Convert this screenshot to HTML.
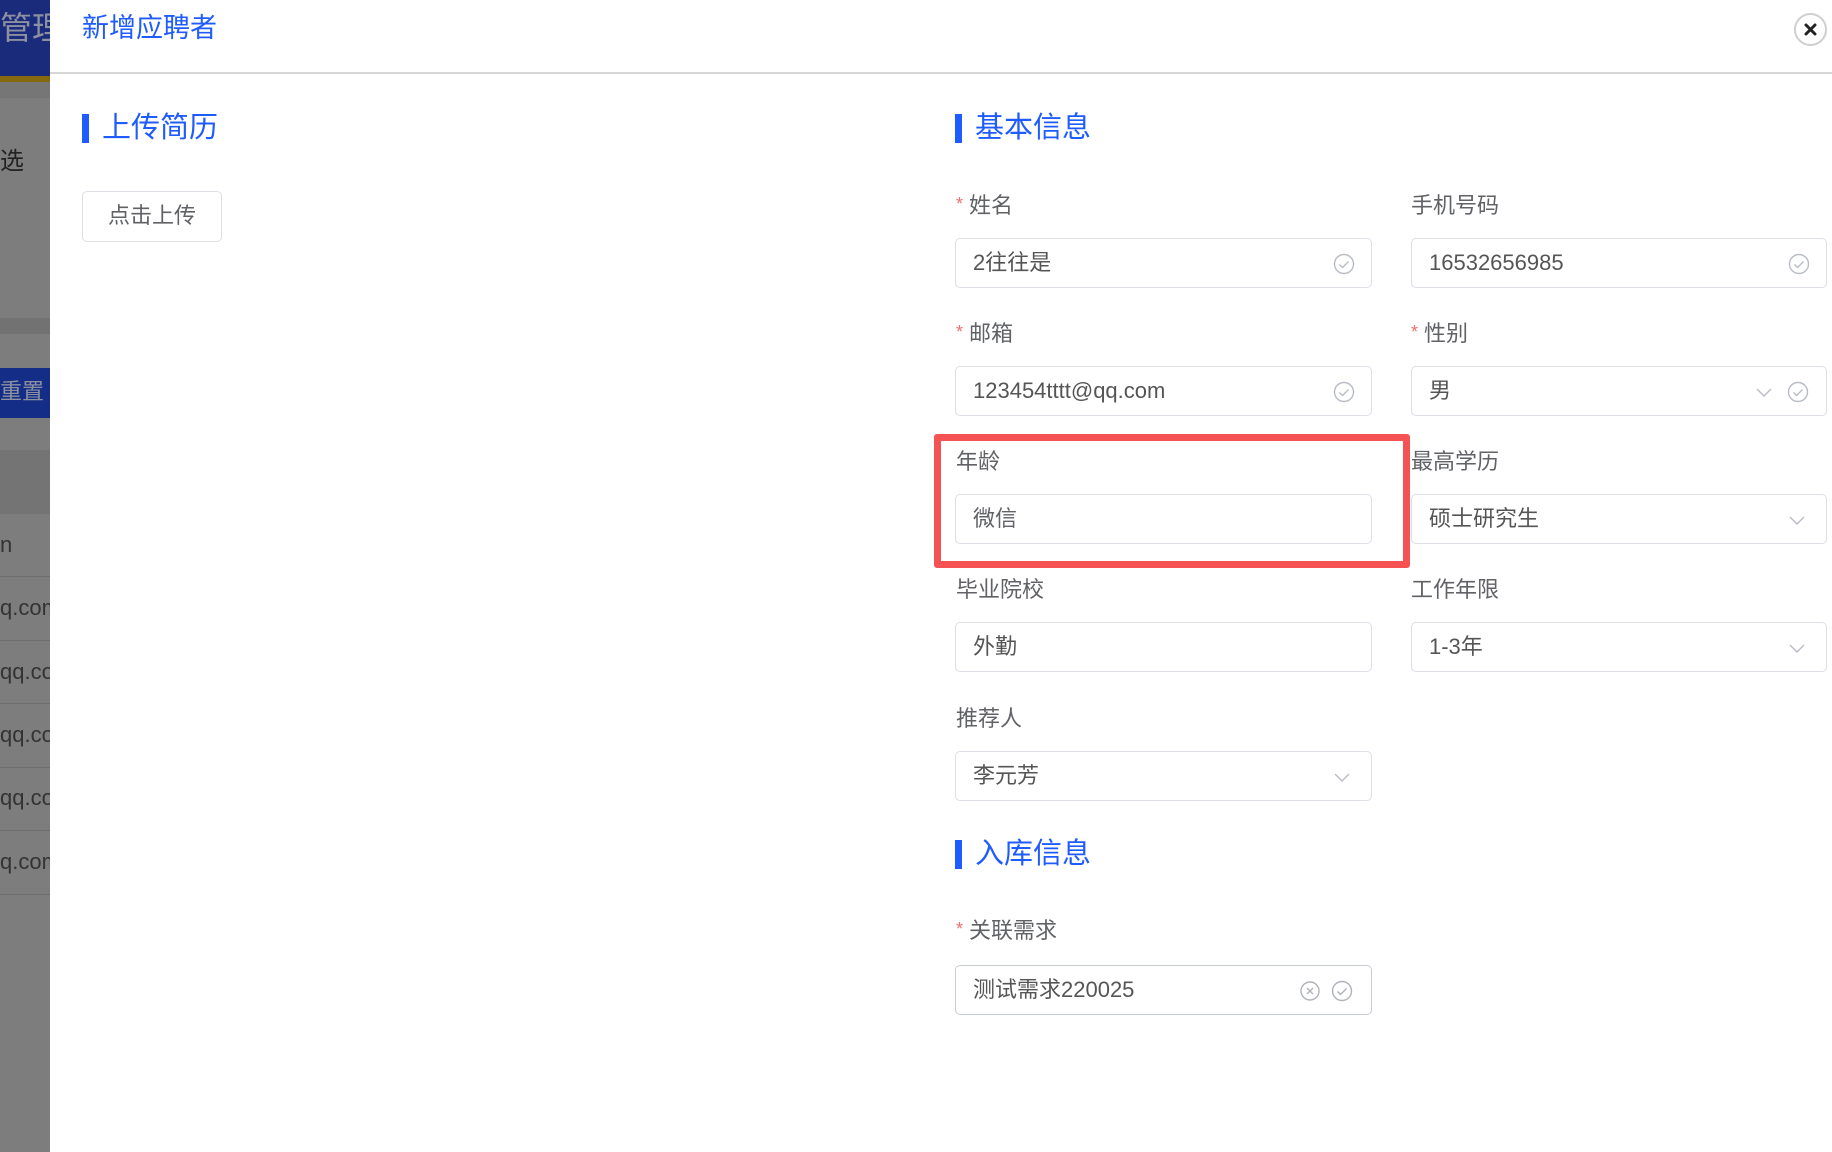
<!DOCTYPE html>
<html><head><meta charset="utf-8"><style>
*{margin:0;padding:0;box-sizing:border-box}
body{width:1832px;height:1152px;position:relative;overflow:hidden;background:#fff;font-family:"Liberation Sans","Noto Sans CJK SC",sans-serif}
.a{position:absolute}
.lbl{position:absolute;font-size:22px;color:#606266;line-height:30px}
.star{color:#f56c6c;font-size:18px;margin-right:6px;position:relative;top:-3px}
.inp{position:absolute;height:50px;border:1.5px solid #dcdfe6;border-radius:5px;font-size:22px;color:#555;line-height:47px;padding-left:17px;background:#fff}
.h{position:absolute;font-size:29px;color:#1f5cff;line-height:32px}
.bar{position:absolute;width:7px;height:29px;background:#1f5cff}
.ic{position:absolute;top:14px}
</style></head><body>
<div class="a" style="left:0;top:0;width:50px;height:1152px;background:#7d7d7d"></div>
<div class="a" style="left:0;top:0;width:50px;height:76px;background:#1a2b7c"></div>
<div class="a" style="left:0;top:10px;font-size:32px;color:#8c90a0;line-height:36px;white-space:nowrap">管理</div>
<div class="a" style="left:0;top:76px;width:50px;height:6px;background:#86680e"></div>
<div class="a" style="left:0;top:82px;width:50px;height:16px;background:#767676"></div>
<div class="a" style="left:0;top:148px;font-size:24px;color:#222;line-height:28px">选</div>
<div class="a" style="left:0;top:318px;width:50px;height:16px;background:#727272"></div>
<div class="a" style="left:0;top:368px;width:50px;height:50px;background:#142e88"></div>
<div class="a" style="left:0;top:378px;font-size:22px;color:#8c90a0;line-height:28px">重置</div>
<div class="a" style="left:0;top:450px;width:50px;height:64px;background:#747474"></div>
<div class="a" style="left:0;top:530px;font-size:22px;color:#333;line-height:30px;white-space:nowrap">n</div>
<div class="a" style="left:0;top:576px;width:50px;height:1px;background:#6e6e6e"></div>
<div class="a" style="left:0;top:593px;font-size:22px;color:#333;line-height:30px;white-space:nowrap">q.com</div>
<div class="a" style="left:0;top:640px;width:50px;height:1px;background:#6e6e6e"></div>
<div class="a" style="left:0;top:657px;font-size:22px;color:#333;line-height:30px;white-space:nowrap">qq.co</div>
<div class="a" style="left:0;top:703px;width:50px;height:1px;background:#6e6e6e"></div>
<div class="a" style="left:0;top:720px;font-size:22px;color:#333;line-height:30px;white-space:nowrap">qq.co</div>
<div class="a" style="left:0;top:767px;width:50px;height:1px;background:#6e6e6e"></div>
<div class="a" style="left:0;top:783px;font-size:22px;color:#333;line-height:30px;white-space:nowrap">qq.co</div>
<div class="a" style="left:0;top:830px;width:50px;height:1px;background:#6e6e6e"></div>
<div class="a" style="left:0;top:847px;font-size:22px;color:#333;line-height:30px;white-space:nowrap">q.com</div>
<div class="a" style="left:0;top:894px;width:50px;height:1px;background:#6e6e6e"></div>

<div class="a" style="left:50px;top:0;width:1782px;height:1152px;background:#fff"></div>
<div class="a" style="left:82px;top:11px;font-size:27px;color:#1f5cff;line-height:34px">新增应聘者</div>
<div class="a" style="left:1794px;top:13px;width:33px;height:33px;border:2px solid #cfcfcf;border-radius:50%;background:#fff"></div>
<svg class="a" style="left:1801px;top:20px" width="19" height="19" viewBox="0 0 19 19"><path d="M5 5L14 14M14 5L5 14" stroke="#222" stroke-width="3" stroke-linecap="round"/></svg>
<div class="a" style="left:50px;top:72px;width:1782px;height:2px;background:#d6d6d6"></div>

<div class="bar" style="left:82px;top:114px"></div>
<div class="h" style="left:102px;top:112px">上传简历</div>
<div class="a" style="left:82px;top:191px;width:140px;height:51px;border:1.5px solid #dcdfe6;border-radius:5px;font-size:22px;color:#606266;text-align:center;line-height:48px">点击上传</div>

<div class="bar" style="left:955px;top:114px"></div>
<div class="h" style="left:975px;top:112px">基本信息</div>

<div class="lbl" style="left:956px;top:191px"><span class="star">*</span>姓名</div>
<div class="inp" style="left:955px;top:238px;width:417px">2往往是<svg class="ic" style="left:377px" width="22" height="22" viewBox="0 0 22 22"><circle cx="11" cy="11" r="9.5" fill="none" stroke="#b8bcc4" stroke-width="1.4"/><path d="M6.5 11.5l3 3 6-6" fill="none" stroke="#b8bcc4" stroke-width="1.4"/></svg></div>
<div class="lbl" style="left:1411px;top:191px">手机号码</div>
<div class="inp" style="left:1411px;top:238px;width:416px">16532656985<svg class="ic" style="left:376px" width="22" height="22" viewBox="0 0 22 22"><circle cx="11" cy="11" r="9.5" fill="none" stroke="#b8bcc4" stroke-width="1.4"/><path d="M6.5 11.5l3 3 6-6" fill="none" stroke="#b8bcc4" stroke-width="1.4"/></svg></div>

<div class="lbl" style="left:956px;top:319px"><span class="star">*</span>邮箱</div>
<div class="inp" style="left:955px;top:366px;width:417px">123454tttt@qq.com<svg class="ic" style="left:377px" width="22" height="22" viewBox="0 0 22 22"><circle cx="11" cy="11" r="9.5" fill="none" stroke="#b8bcc4" stroke-width="1.4"/><path d="M6.5 11.5l3 3 6-6" fill="none" stroke="#b8bcc4" stroke-width="1.4"/></svg></div>
<div class="lbl" style="left:1411px;top:319px"><span class="star">*</span>性别</div>
<div class="inp" style="left:1411px;top:366px;width:416px">男<svg class="ic" style="left:343px;top:16px" width="18" height="18" viewBox="0 0 18 18"><path d="M2 6l7 7 7-7" fill="none" stroke="#b8bcc4" stroke-width="1.4"/></svg><svg class="ic" style="left:375px" width="22" height="22" viewBox="0 0 22 22"><circle cx="11" cy="11" r="9.5" fill="none" stroke="#b8bcc4" stroke-width="1.4"/><path d="M6.5 11.5l3 3 6-6" fill="none" stroke="#b8bcc4" stroke-width="1.4"/></svg></div>

<div class="lbl" style="left:956px;top:447px">年龄</div>
<div class="inp" style="left:955px;top:494px;width:417px;color:#606266">微信</div>
<div class="lbl" style="left:1411px;top:447px">最高学历</div>
<div class="inp" style="left:1411px;top:494px;width:416px">硕士研究生<svg class="ic" style="left:376px;top:16px" width="18" height="18" viewBox="0 0 18 18"><path d="M2 6l7 7 7-7" fill="none" stroke="#b8bcc4" stroke-width="1.4"/></svg></div>

<div class="lbl" style="left:956px;top:575px">毕业院校</div>
<div class="inp" style="left:955px;top:622px;width:417px">外勤</div>
<div class="lbl" style="left:1411px;top:575px">工作年限</div>
<div class="inp" style="left:1411px;top:622px;width:416px">1-3年<svg class="ic" style="left:376px;top:16px" width="18" height="18" viewBox="0 0 18 18"><path d="M2 6l7 7 7-7" fill="none" stroke="#b8bcc4" stroke-width="1.4"/></svg></div>

<div class="lbl" style="left:956px;top:704px">推荐人</div>
<div class="inp" style="left:955px;top:751px;width:417px">李元芳<svg class="ic" style="left:377px;top:16px" width="18" height="18" viewBox="0 0 18 18"><path d="M2 6l7 7 7-7" fill="none" stroke="#b8bcc4" stroke-width="1.4"/></svg></div>

<div class="bar" style="left:955px;top:840px"></div>
<div class="h" style="left:975px;top:838px">入库信息</div>

<div class="lbl" style="left:956px;top:916px"><span class="star">*</span>关联需求</div>
<div class="inp" style="left:955px;top:965px;width:417px;border-color:#c8ccd4">测试需求220025<svg class="ic" style="left:343px" width="22" height="22" viewBox="0 0 22 22"><circle cx="11" cy="11" r="9" fill="none" stroke="#b0b3ba" stroke-width="1.4"/><path d="M8 8l6 6M14 8l-6 6" stroke="#b0b3ba" stroke-width="1.4"/></svg><svg class="ic" style="left:375px" width="22" height="22" viewBox="0 0 22 22"><circle cx="11" cy="11" r="9.5" fill="none" stroke="#b0b3ba" stroke-width="1.4"/><path d="M6.5 11.5l3 3 6-6" fill="none" stroke="#b0b3ba" stroke-width="1.4"/></svg></div>

<div class="a" style="left:934px;top:434px;width:476px;height:134px;border:7px solid #f55353;border-radius:3px"></div>
</body></html>
